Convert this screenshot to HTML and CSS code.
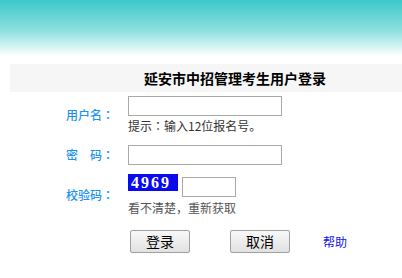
FILE: index.html
```html
<!DOCTYPE html>
<html lang="zh-CN">
<head>
<meta charset="utf-8">
<title>延安市中招管理考生用户登录</title>
<link rel="stylesheet" href="styles.css">
</head>
<body>
<div class="top"></div>
<div class="main">
  <div class="titlebar">延安市中招管理考生用户登录</div>
  <form class="form">
    <div class="row row-user">
      <label class="label">用户名<span class="colon" lang="ja">：</span></label>
      <div class="field">
        <input class="text" type="text">
        <div class="hint">提示<span class="colon" lang="ja">：</span>输入12位报名号。</div>
      </div>
    </div>
    <div class="row row-pass">
      <label class="label">密&#12288;码<span class="colon" lang="ja">：</span></label>
      <div class="field">
        <input class="text" type="password">
      </div>
    </div>
    <div class="row row-code">
      <label class="label">校验码<span class="colon" lang="ja">：</span></label>
      <div class="field">
        <div class="code-line">
          <span class="captcha">4969</span>
          <input class="code" type="text">
        </div>
        <div class="refresh">看不清楚，重新获取</div>
      </div>
    </div>
    <div class="actions">
      <button class="btn" type="button">登录</button>
      <button class="btn" type="button">取消</button>
      <a class="help" href="#">帮助</a>
    </div>
  </form>
</div>
</body>
</html>
```
FILE: styles.css
```css
html, body {
  margin: 0;
  padding: 0;
  background: #fff;
}
body {
  font-family: "Noto Sans CJK SC", "Noto Sans", "Liberation Sans", sans-serif;
  font-size: 12px;
  color: #333;
}
.top {
  height: 56px;
  background: linear-gradient(to bottom, #3cc8c9 0%, #8ee0e0 55%, #ffffff 100%);
}
.main {
  margin: 8px 0 0 10px;
}
.titlebar {
  height: 28px;
  line-height: 28px;
  background: #f6f6f6;
  font-size: 14px;
  font-weight: bold;
  color: #000;
  padding-left: 134px;
}
.form {
  margin: 0;
  padding: 4px 0 0 56px;
}
.row {
  display: grid;
  grid-template-columns: 62px 1fr;
  align-items: center;
}
.row-pass { margin-top: 11px; }
.row-code { margin-top: 9px; }
.label {
  font-size: 12px;
  font-weight: 500;
  line-height: 16px;
  color: #1a94f2;
  white-space: nowrap;
}
.colon {
  font-family: "Noto Sans CJK JP", "Noto Sans CJK SC", sans-serif;
}
.field {
  display: flex;
  flex-direction: column;
  align-items: flex-start;
}
.text {
  box-sizing: border-box;
  width: 154px;
  height: 20px;
  margin: 0;
  padding: 0 2px;
  border: 1px solid #a9a9a9;
  background: #fff;
  font-size: 12px;
}
.hint {
  margin-top: 2px;
  line-height: 16px;
  font-size: 12px;
  color: #333;
  white-space: nowrap;
}
.code-line {
  display: flex;
  align-items: flex-start;
  gap: 4px;
}
.captcha {
  display: block;
  box-sizing: border-box;
  width: 50px;
  height: 17px;
  line-height: 17px;
  background: #0a0af0;
  color: #fff;
  font-family: "Liberation Serif", serif;
  font-weight: bold;
  font-size: 16px;
  letter-spacing: 2px;
  padding-left: 3px;
  overflow: hidden;
}
.code {
  box-sizing: border-box;
  width: 54px;
  height: 20px;
  margin: 3px 0 0 0;
  padding: 0 2px;
  border: 1px solid #a9a9a9;
  background: #fff;
}
.refresh {
  margin-top: 3px;
  line-height: 16px;
  font-size: 12px;
  color: #555;
  white-space: nowrap;
}
.actions {
  display: flex;
  align-items: center;
  margin-top: 14px;
  padding-left: 64px;
}
.btn {
  box-sizing: border-box;
  width: 60px;
  height: 23px;
  padding: 0;
  margin: 0 40px 0 0;
  border: 1px solid #a0a0a0;
  border-radius: 2px;
  background: linear-gradient(to bottom, #f8f8f8, #e1e1e1);
  font-family: "Noto Sans CJK SC", sans-serif;
  font-size: 14px;
  line-height: 21px;
  color: #000;
}
.btn + .btn {
  margin-right: 33px;
}
.help {
  font-size: 12px;
  color: #1010ee;
  text-decoration: none;
}
```
